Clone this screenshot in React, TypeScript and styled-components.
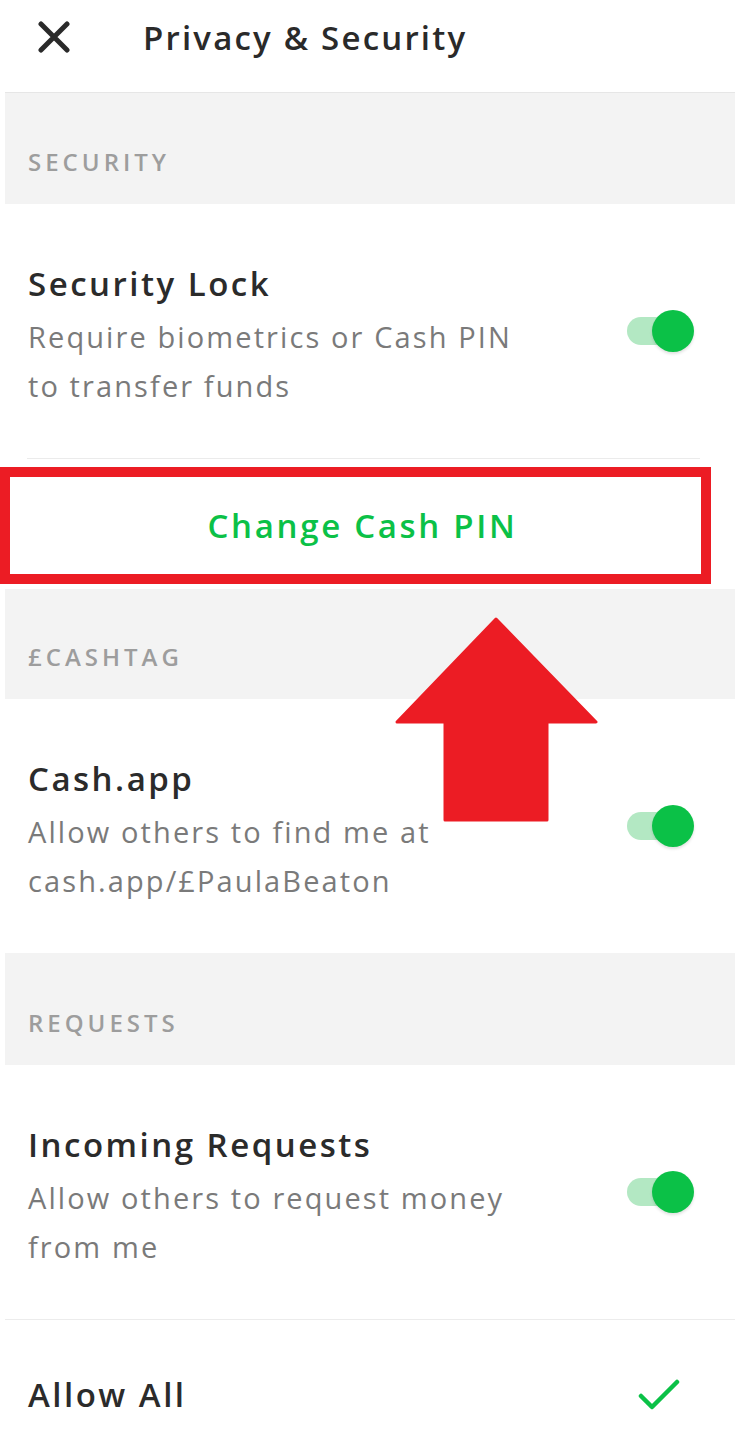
import * as React from 'react';
import styled, { createGlobalStyle } from 'styled-components';

const GlobalStyle = createGlobalStyle`
  body {
    margin: 0;
    background: #ffffff;
    font-family: "Open Sans", "Liberation Sans", sans-serif;
  }
`;

const green = '#0bc147';

const Screen = styled.div`
  position: relative;
  width: 740px;
  min-height: 1441px;
  background: #ffffff;
  overflow: hidden;
`;

const Header = styled.div`
  height: 92px;
  display: flex;
  align-items: center;
  border-bottom: 1px solid #e6e6e6;
  margin: 0 5px;
`;

const CloseButton = styled.button`
  width: 40px;
  height: 40px;
  margin: -18px 69px 0 29px;
  padding: 0;
  border: 0;
  background: none;
  display: flex;
  align-items: center;
  justify-content: center;
`;

const Title = styled.h1`
  margin: -18px 0 0;
  font-size: 33px;
  font-weight: 600;
  letter-spacing: 2.2px;
  color: #2a2a2a;
`;

const SectionLabel = styled.div<{ $h: number }>`
  height: ${(p) => p.$h}px;
  box-sizing: border-box;
  margin: 0 5px;
  padding: 0 23px 29px;
  background: #f3f3f3;
  display: flex;
  align-items: flex-end;
  font-size: 24px;
  line-height: 26px;
  font-weight: 600;
  letter-spacing: 4px;
  color: #9d9d9d;
`;

const SettingRow = styled.div`
  display: flex;
  align-items: center;
  justify-content: space-between;
  padding: 60px 46px 48px 28px;
`;

const RowText = styled.div`
  display: flex;
  flex-direction: column;
`;

const RowTitle = styled.div`
  font-size: 33px;
  line-height: 40px;
  font-weight: 600;
  letter-spacing: 2.5px;
  color: #2b2b2b;
`;

const RowDesc = styled.div`
  margin-top: 8px;
  font-size: 29px;
  line-height: 49px;
  letter-spacing: 2.1px;
  color: #7a7a7a;
  white-space: nowrap;
`;

const Toggle = styled.span<{ $on?: boolean }>`
  position: relative;
  width: 67px;
  height: 42px;
  margin-bottom: 12px;
  flex-shrink: 0;

  &::before {
    content: '';
    position: absolute;
    left: 0;
    top: 7px;
    width: 50px;
    height: 28px;
    border-radius: 14px;
    background: #b3e8c3;
  }

  &::after {
    content: '';
    position: absolute;
    right: 0;
    top: 0;
    width: 42px;
    height: 42px;
    border-radius: 50%;
    background: ${green};
    box-shadow: 0 2px 3px rgba(0, 0, 0, 0.12);
  }
`;

const Divider = styled.div`
  height: 1px;
  background: #ebebeb;
  margin: 0 40px 0 27px;
`;

const PinButton = styled.button`
  display: flex;
  align-items: center;
  justify-content: center;
  box-sizing: border-box;
  width: 711px;
  height: 117px;
  margin: 8px 0 5px;
  padding: 0 0 0 14px;
  border: 10px solid #ec1c24;
  background: #ffffff;
  font-family: inherit;
  font-size: 33px;
  font-weight: 600;
  letter-spacing: 2.7px;
  color: ${green};
`;

const AllowRow = styled.div`
  display: flex;
  align-items: center;
  justify-content: space-between;
  margin: 0 5px;
  padding: 55px 55px 25px 23px;
  border-top: 1px solid #ececec;
`;

const Arrow = styled.svg`
  position: absolute;
  left: 395px;
  top: 617px;
`;

const settings = {
  lock: {
    title: 'Security Lock',
    desc: ['Require biometrics or Cash PIN', 'to transfer funds'],
  },
  cashtag: {
    title: 'Cash.app',
    desc: ['Allow others to find me at', 'cash.app/£PaulaBeaton'],
  },
  requests: {
    title: 'Incoming Requests',
    desc: ['Allow others to request money', 'from me'],
  },
};

const Setting = ({ title, desc }: { title: string; desc: string[] }) => (
  <SettingRow>
    <RowText>
      <RowTitle>{title}</RowTitle>
      <RowDesc>
        {desc[0]}
        <br />
        {desc[1]}
      </RowDesc>
    </RowText>
    <Toggle $on />
  </SettingRow>
);

export default function App() {
  return (
    <Screen>
      <GlobalStyle />
      <Header>
        <CloseButton aria-label="Close">
          <svg width="34" height="32" viewBox="0 0 34 32">
            <path d="M4 3 L30 29 M30 3 L4 29" stroke="#2a2a2a" strokeWidth="5" strokeLinecap="round" />
          </svg>
        </CloseButton>
        <Title>Privacy &amp; Security</Title>
      </Header>

      <SectionLabel $h={111}>SECURITY</SectionLabel>
      <Setting {...settings.lock} />
      <Divider />
      <PinButton>Change Cash PIN</PinButton>

      <SectionLabel $h={110}>£CASHTAG</SectionLabel>
      <Setting {...settings.cashtag} />

      <SectionLabel $h={112}>REQUESTS</SectionLabel>
      <Setting {...settings.requests} />

      <AllowRow>
        <RowTitle>Allow All</RowTitle>
        <svg width="42" height="34" viewBox="0 0 42 34">
          <path d="M3 18 L14 29 L39 4" fill="none" stroke={green} strokeWidth="4.5" strokeLinecap="round" strokeLinejoin="round" />
        </svg>
      </AllowRow>

      <Arrow width="203" height="205" viewBox="0 0 203 205">
        <polygon
          points="101,2 201,105 152,105 152,203 50,203 50,105 2,105"
          fill="#ec1c24"
          stroke="#ec1c24"
          strokeWidth="3"
          strokeLinejoin="round"
        />
      </Arrow>
    </Screen>
  );
}
